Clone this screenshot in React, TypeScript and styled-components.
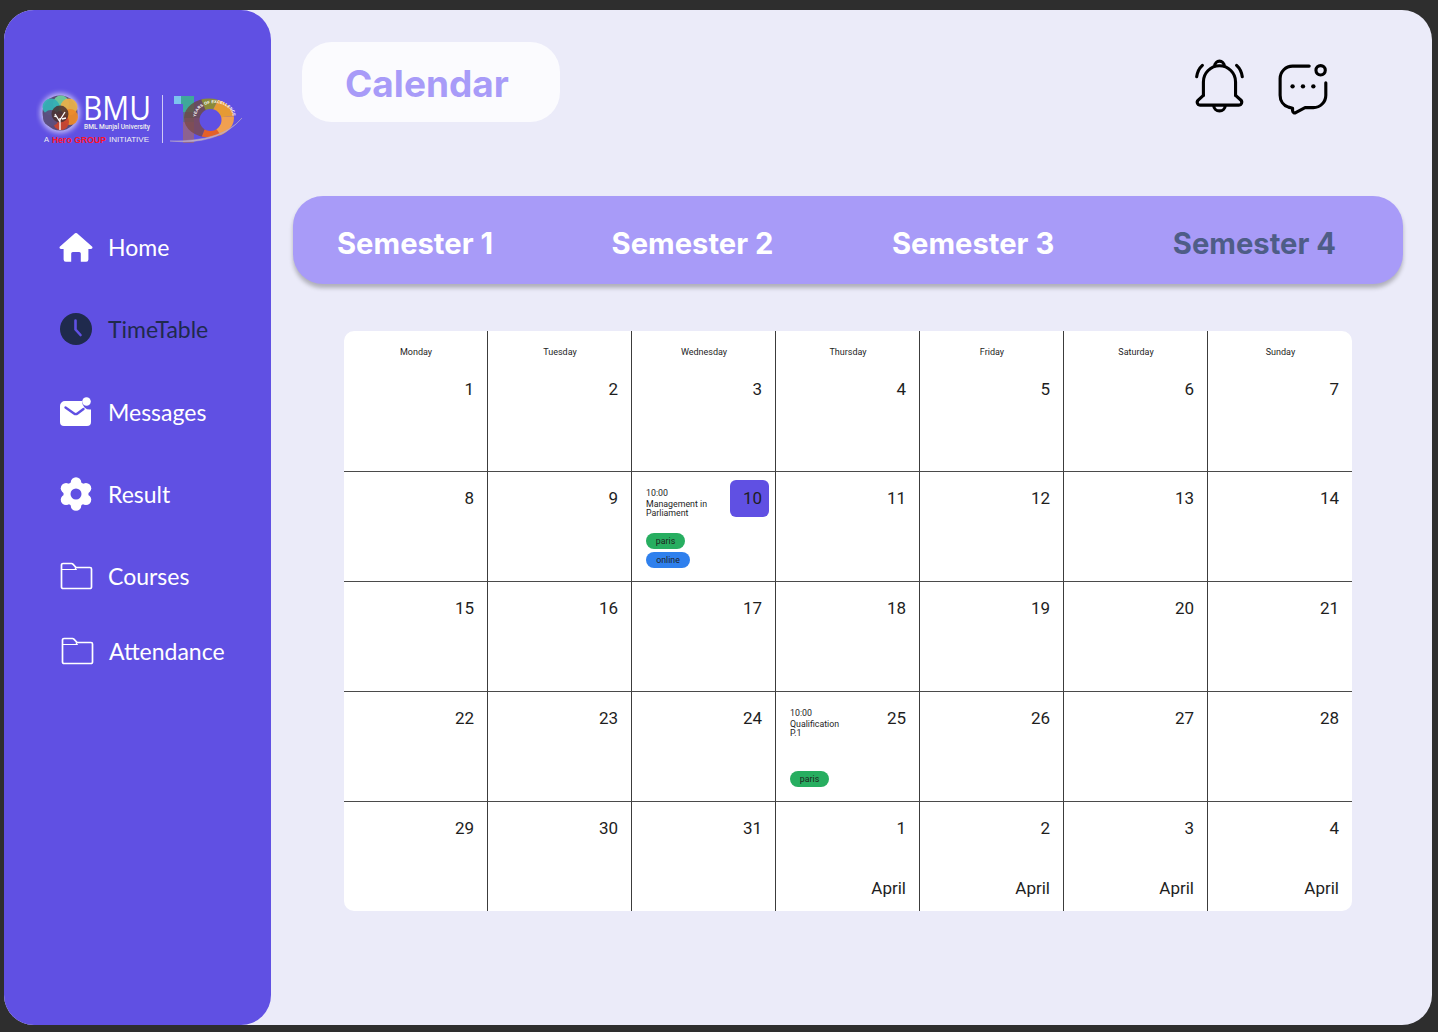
import React from 'react'
import styled, { createGlobalStyle } from 'styled-components'

const GlobalStyle = createGlobalStyle`
  html, body {
    margin: 0;
    padding: 0;
    background: #2e2e2e;
  }
  * { box-sizing: border-box; }
`

const Page = styled.div`
  width: 1438px;
  height: 1032px;
  padding: 10px 6px 7px 4px;
  overflow: hidden;
`

const Frame = styled.div`
  display: flex;
  height: 100%;
  background: #ebebf9;
  border-radius: 30px;
`

const Sidebar = styled.aside`
  flex: 0 0 267px;
  background: #6050e3;
  border-radius: 30px;
  padding-top: 74px;
`

const LogoWrap = styled.div`
  display: flex;
  height: 62px;
  margin-left: 32px;
  margin-bottom: 81px;
`

const Nav = styled.nav`
  display: flex;
  flex-direction: column;
  padding-left: 53px;
`

const NavItem = styled.a<{ $dark?: boolean; $top?: number; $shift?: number }>`
  display: flex;
  align-items: center;
  height: 40px;
  margin-top: ${(p) => p.$top ?? 42}px;
  margin-left: ${(p) => p.$shift ?? 0}px;
  gap: 13px;
  color: ${(p) => (p.$dark ? '#1f2a4d' : '#ffffff')};
  font-family: 'Lato', sans-serif;
  font-size: 23px;
  font-weight: 400;
`

const NavIcon = styled.span`
  display: flex;
  justify-content: center;
  width: 38px;
`

const Main = styled.main`
  flex: 1;
  padding: 32px 29px 0 22px;
`

const Header = styled.header`
  display: flex;
  align-items: flex-start;
  justify-content: space-between;
  height: 80px;
  padding: 0 73px 0 9px;
`

const TitlePill = styled.div`
  display: flex;
  align-items: center;
  width: 258px;
  height: 80px;
  padding: 3px 0 0 43px;
  background: #fbfbfe;
  border-radius: 30px;
`

const Title = styled.h1`
  margin: 0;
  color: #a89bf8;
  font-family: 'Inter', sans-serif;
  font-size: 37px;
  font-weight: 700;
`

const HeaderIcons = styled.div`
  display: flex;
  align-items: flex-start;
  gap: 32px;
  padding-top: 15px;
`

const ChatWrap = styled.span`
  display: flex;
  margin-top: 6px;
`

const SemesterBar = styled.div`
  display: flex;
  align-items: center;
  justify-content: space-between;
  height: 88px;
  margin-top: 74px;
  padding: 6px 67px 0 44px;
  background: #a89bf8;
  border-radius: 30px;
  box-shadow: 0 4px 4px rgba(0, 0, 0, 0.25);
`

const Semester = styled.div<{ $muted?: boolean }>`
  color: ${(p) => (p.$muted ? '#4e5d87' : '#ffffff')};
  font-family: 'Inter', sans-serif;
  font-size: 29.2px;
  font-weight: 700;
`

const Calendar = styled.div`
  display: grid;
  grid-template-columns: repeat(7, 144px);
  grid-template-rows: 141px 110px 110px 110px 109px;
  width: 1008px;
  margin: 47px 0 0 51px;
  background: #ffffff;
  border-radius: 10px;
  overflow: hidden;
`

const Cell = styled.div<{ $lastCol: boolean; $lastRow: boolean }>`
  display: flex;
  justify-content: space-between;
  padding: 16px 13px 0 14px;
  border-right: ${(p) => (p.$lastCol ? 'none' : '1px solid #3c3c3c')};
  border-bottom: ${(p) => (p.$lastRow ? 'none' : '1px solid #4a4a4a')};
  font-family: 'Roboto', sans-serif;
  color: #1e1e1e;
`

const HeadCell = styled(Cell)`
  flex-direction: column;
  justify-content: flex-start;
  padding-top: 15px;
`

const Weekday = styled.div`
  margin-bottom: 21px;
  font-size: 9px;
  line-height: 12px;
  text-align: center;
`

const DateColumn = styled.div`
  display: flex;
  flex: 1;
  flex-direction: column;
  align-items: flex-end;
  justify-content: space-between;
  padding-bottom: 13px;
`

const DateNumber = styled.div<{ $active?: boolean }>`
  font-size: 17px;
  line-height: 20px;
  text-align: right;
  ${(p) =>
    p.$active &&
    `
    width: 39px;
    height: 37px;
    margin: -8px -7px 0 0;
    padding: 8px 7px 0 0;
    background: #6050e3;
    border-radius: 6px;
  `}
`

const MonthLabel = styled.div`
  font-size: 17px;
  line-height: 20px;
`

const EventBlock = styled.div`
  display: flex;
  flex-direction: column;
  align-items: flex-start;
  font-size: 8.8px;
`

const EventTime = styled.div`
  line-height: 10px;
`

const EventTitle = styled.div`
  margin-top: 2px;
  line-height: 9px;
  white-space: nowrap;
`

const Tag = styled.span<{ $color: string; $width: number; $top: number }>`
  display: flex;
  align-items: center;
  justify-content: center;
  width: ${(p) => p.$width}px;
  height: 16px;
  margin-top: ${(p) => p.$top}px;
  background: ${(p) => p.$color};
  border-radius: 8px;
  font-size: 8.8px;
`

const HomeIcon = () => (
  <svg width="34" height="30" viewBox="0 0 34 30">
    <path
      fill="#fff"
      d="M16 1.3a1.6 1.6 0 0 1 2 0l15 13.2c1 .9.4 2.5-1 2.5h-2.6v10.5a2.2 2.2 0 0 1-2.2 2.2h-5.4V21.5a1.6 1.6 0 0 0-1.6-1.6h-6.4a1.6 1.6 0 0 0-1.6 1.6v8.2H6.8a2.2 2.2 0 0 1-2.2-2.2V17H2c-1.4 0-2-1.6-1-2.5z"
    />
  </svg>
)

const ClockIcon = () => (
  <svg width="32" height="32" viewBox="0 0 32 32">
    <circle cx="16" cy="16" r="16" fill="#1f2a4d" />
    <path d="M15.5 7.5v9l5 5.5" fill="none" stroke="#6050e3" strokeWidth="2.6" strokeLinecap="round" strokeLinejoin="round" />
  </svg>
)

const MailIcon = () => (
  <svg width="34" height="30" viewBox="0 0 34 30">
    <path fill="#fff" d="M6 4h17a8 8 0 0 0 9 8.500V25a4 4 0 0 1-4 4H5a4 4 0 0 1-4-4V9a5 5 0 0 1 5-5z" />
    <circle cx="27.500" cy="4.500" r="4.300" fill="#fff" />
    <path d="M6.500 10.500l8.500 6a3 3 0 0 0 3.500 0l6-4.500" fill="none" stroke="#6050e3" strokeWidth="2.400" strokeLinecap="round" />
  </svg>
)

const GearIcon = () => (
  <svg width="34" height="34" viewBox="0 0 34 34">
    <g fill="#fff">
      <circle cx="17" cy="17" r="12.500" />
      {[0, 60, 120, 180, 240, 300].map((deg) => (
        <circle
          key={deg}
          cx={17 + 11.5 * Math.sin((deg * Math.PI) / 180)}
          cy={17 - 11.5 * Math.cos((deg * Math.PI) / 180)}
          r="5.300"
        />
      ))}
    </g>
    <circle cx="17" cy="17" r="5.500" fill="#6050e3" />
  </svg>
)

const FolderIcon = () => (
  <svg width="33" height="28" viewBox="0 0 33 28">
    <path
      d="M1.500 25V3a1.500 1.500 0 0 1 1.500-1.500h8.500a2 2 0 0 1 1.400.6l3.200 3.400H30a1.500 1.500 0 0 1 1.500 1.500V25a1.500 1.500 0 0 1-1.500 1.500H3A1.500 1.500 0 0 1 1.500 25z"
      fill="none"
      stroke="#fff"
      strokeWidth="1.700"
      strokeLinejoin="round"
    />
    <path d="M1.500 7.500h14.600l-1.200-2" fill="none" stroke="#fff" strokeWidth="1.200" />
  </svg>
)

const BellIcon = () => (
  <svg width="52" height="56" viewBox="0 0 50 54" fill="none" stroke="#000" strokeWidth="3" strokeLinecap="round" strokeLinejoin="round">
    <path d="M9 37V24a15.500 15.500 0 0 1 31 0v13" />
    <path d="M9 37l-5 4.500a2.800 2.800 0 0 0 2 4.900h37a2.800 2.800 0 0 0 2-4.900L40 37" />
    <path d="M20 8.500a4.500 4.500 0 0 1 9 0" />
    <path d="M19 47a5.500 5 0 0 0 11 0" />
    <path d="M2.500 19Q3.500 12 8 8" />
    <path d="M46.500 19Q45.500 12 41 8" />
  </svg>
)

const ChatIcon = () => (
  <svg width="52" height="54" viewBox="0 0 50 52" fill="none" stroke="#000" strokeWidth="3" strokeLinecap="round" strokeLinejoin="round">
    <path d="M30 3H14A12 12 0 0 0 2 15v16a12 12 0 0 0 8 11.500l4 1v2.500a2 2 0 0 0 3 1.700L26 43h8a12 12 0 0 0 12-12V19" />
    <circle cx="41" cy="7" r="4.500" />
    <g fill="#000" stroke="none">
      <circle cx="14" cy="22.500" r="2.100" />
      <circle cx="24" cy="22.500" r="2.100" />
      <circle cx="34" cy="22.500" r="2.100" />
    </g>
  </svg>
)

const Logo = () => (
  <svg width="210" height="62" viewBox="36 84 210 62">
    <defs>
      <filter id="glow" x="-40%" y="-40%" width="180%" height="180%">
        <feGaussianBlur stdDeviation="2.500" />
      </filter>
      <clipPath id="ring">
        <path clipRule="evenodd" d="M184 118a25 19.500 0 1 0 50 0a25 19.500 0 1 0-50 0zM199.500 120a11 11 0 1 0 22 0a11 11 0 1 0-22 0z" />
      </clipPath>
    </defs>
    <circle cx="60" cy="113" r="20" fill="#fff" opacity="0.6" filter="url(#glow)" />
    <circle cx="60" cy="113" r="17.500" fill="#5a4a7a" />
    <circle cx="61" cy="103.500" r="8" fill="#6cc59a" />
    <circle cx="51" cy="107" r="8.500" fill="#35b0b5" opacity="0.95" />
    <circle cx="69" cy="107" r="8.500" fill="#e8b04a" opacity="0.95" />
    <circle cx="70" cy="117" r="8" fill="#ec8a2a" opacity="0.95" />
    <circle cx="61" cy="122" r="8" fill="#c8452e" opacity="0.95" />
    <circle cx="51" cy="118" r="8" fill="#5c4f80" opacity="0.95" />
    <circle cx="60" cy="114" r="8.500" fill="#4a3030" opacity="0.85" />
    <path d="M60 130v-12m0 4l-5-8m5 6l5-8m-8 5l-3-1m8 3l4-1" stroke="#fff" strokeWidth="1.300" fill="none" />
    <text x="83" y="120" fill="#fff" fontFamily="'Open Sans', sans-serif" fontSize="33" textLength="68" lengthAdjust="spacingAndGlyphs">BMU</text>
    <text x="84" y="129" fill="#eee" fontFamily="'Roboto', sans-serif" fontSize="6.500" fontWeight="500" textLength="66" lengthAdjust="spacingAndGlyphs">BML Munjal University</text>
    <text x="44" y="142" fill="#f0f0f0" fontFamily="'Liberation Sans', sans-serif" fontSize="7.500">A</text>
    <text x="52" y="142.500" fill="#ff1428" fontFamily="'Liberation Sans', sans-serif" fontSize="9" fontWeight="700" textLength="54" lengthAdjust="spacingAndGlyphs">Hero GROUP</text>
    <text x="109" y="142" fill="#f0f0f0" fontFamily="'Liberation Sans', sans-serif" fontSize="7.500" textLength="40" lengthAdjust="spacingAndGlyphs">INITIATIVE</text>
    <rect x="162" y="95" width="1" height="48" fill="#cfc9f5" />
    <path d="M174 96h7v8h-7z" fill="#7cc4ee" />
    <path d="M181 96h13v24h-11v-16h-2z" fill="#3fa89a" />
    <path d="M183 112h11v14h-11z" fill="#5e6b94" />
    <path d="M183 122h11v21h-11z" fill="#8d6290" />
    <g clipPath="url(#ring)">
      <path d="M209 118L180 118V92h20z" fill="#6a4a40" opacity="0.8" />
      <path d="M209 118L198 92h24z" fill="#8a8a3a" />
      <path d="M209 118L222 92h16v24z" fill="#e69a34" />
      <path d="M209 118L238 116v30h-12z" fill="#f0a050" />
      <path d="M209 118L228 146h-30z" fill="#e4602a" />
      <path d="M209 118L198 146h-18v-28z" fill="#7a4a48" opacity="0.8" />
    </g>
    <path d="M170 141Q218 146 242 118Q222 142 170 141z" fill="#b9a8c8" stroke="#b9a8c8" strokeWidth="0.500" />
    <path id="arcText" d="M196 117A18.500 14 0 0 1 233 117" fill="none" />
    <text fill="#fff" fontFamily="'Liberation Sans', sans-serif" fontSize="4" fontWeight="700">
      <textPath href="#arcText" textLength="50">YEARS OF EXCELLENCE</textPath>
    </text>
  </svg>
)

const weekdays = ['Monday', 'Tuesday', 'Wednesday', 'Thursday', 'Friday', 'Saturday', 'Sunday']

const weeks = [
  [1, 2, 3, 4, 5, 6, 7],
  [8, 9, 10, 11, 12, 13, 14],
  [15, 16, 17, 18, 19, 20, 21],
  [22, 23, 24, 25, 26, 27, 28],
  [29, 30, 31, 1, 2, 3, 4],
]

export default function App() {
  return (
    <>
      <GlobalStyle />
      <Page>
        <Frame>
          <Sidebar>
            <LogoWrap>
              <Logo />
            </LogoWrap>
            <Nav>
              <NavItem $top={0}>
                <NavIcon><HomeIcon /></NavIcon>Home
              </NavItem>
              <NavItem $dark>
                <NavIcon><ClockIcon /></NavIcon>TimeTable
              </NavItem>
              <NavItem $top={43}>
                <NavIcon><MailIcon /></NavIcon>Messages
              </NavItem>
              <NavItem>
                <NavIcon><GearIcon /></NavIcon>Result
              </NavItem>
              <NavItem>
                <NavIcon><FolderIcon /></NavIcon>Courses
              </NavItem>
              <NavItem $top={35} $shift={1}>
                <NavIcon><FolderIcon /></NavIcon>Attendance
              </NavItem>
            </Nav>
          </Sidebar>
          <Main>
            <Header>
              <TitlePill>
                <Title>Calendar</Title>
              </TitlePill>
              <HeaderIcons>
                <BellIcon />
                <ChatWrap><ChatIcon /></ChatWrap>
              </HeaderIcons>
            </Header>
            <SemesterBar>
              <Semester>Semester 1</Semester>
              <Semester>Semester 2</Semester>
              <Semester>Semester 3</Semester>
              <Semester $muted>Semester 4</Semester>
            </SemesterBar>
            <Calendar>
              {weeks.map((week, r) =>
                week.map((day, c) => {
                  const lastCol = c === 6
                  const lastRow = r === 4
                  if (r === 0) {
                    return (
                      <HeadCell key={`${r}-${c}`} $lastCol={lastCol} $lastRow={lastRow}>
                        <Weekday>{weekdays[c]}</Weekday>
                        <DateNumber>{day}</DateNumber>
                      </HeadCell>
                    )
                  }
                  return (
                    <Cell key={`${r}-${c}`} $lastCol={lastCol} $lastRow={lastRow}>
                      {r === 1 && c === 2 && (
                        <EventBlock>
                          <EventTime>10:00</EventTime>
                          <EventTitle>Management in<br />Parliament</EventTitle>
                          <Tag $color="#27ae60" $width={39} $top={15}>paris</Tag>
                          <Tag $color="#2f80ed" $width={44} $top={3}>online</Tag>
                        </EventBlock>
                      )}
                      {r === 3 && c === 3 && (
                        <EventBlock>
                          <EventTime>10:00</EventTime>
                          <EventTitle>Qualification<br />P.1</EventTitle>
                          <Tag $color="#27ae60" $width={39} $top={33}>paris</Tag>
                        </EventBlock>
                      )}
                      <DateColumn>
                        <DateNumber $active={r === 1 && c === 2}>{day}</DateNumber>
                        {lastRow && c >= 3 && <MonthLabel>April</MonthLabel>}
                      </DateColumn>
                    </Cell>
                  )
                })
              )}
            </Calendar>
          </Main>
        </Frame>
      </Page>
    </>
  )
}
